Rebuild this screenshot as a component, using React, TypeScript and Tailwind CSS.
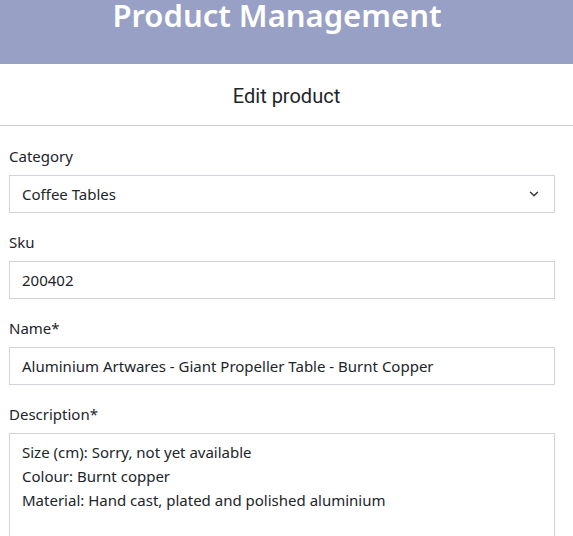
import { ChevronDown } from 'lucide-react'

const font = { fontFamily: '"Noto Sans", "Open Sans", sans-serif' }

function Field({ label, children }: { label: string; children: React.ReactNode }) {
  return (
    <div className="flex flex-col">
      <label className="text-[15px] leading-[18px] text-[#212529] mb-[10px]">{label}</label>
      {children}
    </div>
  )
}

export default function App() {
  return (
    <div className="w-[573px] h-[536px] overflow-hidden bg-white" style={font}>
      <header className="h-16 bg-[#98a0c5] flex justify-center overflow-hidden">
        <h1 className="text-[31px] leading-[32px] font-semibold text-white -mt-[1px] -ml-[19px]">
          Product Management
        </h1>
      </header>
      <div className="h-[62px] border-b border-[#cccccc] flex items-center justify-center">
        <h2 className="text-[20px] text-[#212529] font-['Roboto',sans-serif] mt-[2px]">Edit product</h2>
      </div>
      <div className="pl-[9px] pr-[18px] pt-[21px] flex flex-col gap-[20px]">
        <Field label="Category">
          <div className="h-[38px] border border-[#d0d3d8] flex items-center justify-between pl-[12px] pr-[13px] text-[15px] text-[#212529]">
            <span>Coffee Tables</span>
            <ChevronDown className="w-[14px] h-[14px] text-[#343a40]" strokeWidth={2.5} />
          </div>
        </Field>
        <Field label="Sku">
          <div className="h-[38px] border border-[#d0d3d8] flex items-center pl-[12px] text-[15px] text-[#212529]">
            200402
          </div>
        </Field>
        <Field label="Name*">
          <div className="h-[38px] border border-[#d0d3d8] flex items-center pl-[12px] text-[15px] text-[#212529]">
            Aluminium Artwares - Giant Propeller Table - Burnt Copper
          </div>
        </Field>
        <Field label="Description*">
          <div className="h-[140px] border border-[#d0d3d8] pl-[12px] pt-[6px] text-[15px] leading-[24px] text-[#212529]">
            <div>Size (cm): Sorry, not yet available</div>
            <div>Colour: Burnt copper</div>
            <div>Material: Hand cast, plated and polished aluminium</div>
          </div>
        </Field>
      </div>
    </div>
  )
}
